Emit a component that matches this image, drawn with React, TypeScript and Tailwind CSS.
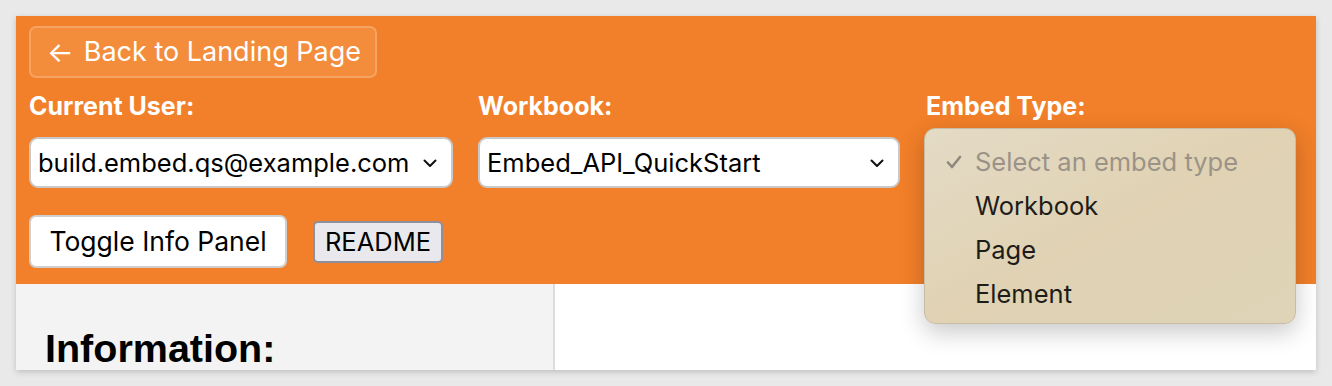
import React from "react";

const sf = { fontFamily: "Inter, 'Noto Sans', sans-serif" };

function Chevron() {
  return (
    <svg width="14" height="9" viewBox="0 0 14 9" fill="none">
      <path d="M1.5 1.5 L7 7 L12.5 1.5" stroke="#111" strokeWidth="2" strokeLinecap="round" strokeLinejoin="round" />
    </svg>
  );
}

function FakeSelect({ value, width }: { value: string; width: string }) {
  return (
    <div
      className={`${width} h-[51px] flex items-center justify-between rounded-[9px] border-2 border-[#c9c9c9] bg-white pl-[7px] pr-[14px] pt-[2px] text-[25.5px] text-black`}
    >
      <span>{value}</span>
      <Chevron />
    </div>
  );
}

export default function App() {
  const options = ["Workbook", "Page", "Element"];

  return (
    <div className="w-full h-[386px] bg-[#e9e9e9] pt-4 px-4" style={sf}>
      <div className="relative w-[1300px] h-[354px] overflow-hidden bg-white shadow-[0_2px_6px_rgba(0,0,0,0.18)]">
        {/* orange header */}
        <div className="h-[268px] bg-[#f27f29] pl-[13px] pt-[10px]">
          <button className="h-[52px] w-[348px] rounded-[7px] border-2 border-[#f5a463] bg-[#f38c3b] text-[27px] text-white flex items-center pl-[16px] gap-[10px]">
            <span className="text-[28px] leading-none">←</span>
            <span>Back to Landing Page</span>
          </button>

          <div className="flex mt-[13px]">
            <div className="w-[449px] flex flex-col">
              <label className="text-[25px] font-bold text-white leading-[30px]">Current User:</label>
              <div className="mt-[16px]">
                <FakeSelect value="build.embed.qs@example.com" width="w-[424px]" />
              </div>
            </div>
            <div className="w-[448px] flex flex-col">
              <label className="text-[25px] font-bold text-white leading-[30px]">Workbook:</label>
              <div className="mt-[16px]">
                <FakeSelect value="Embed_API_QuickStart" width="w-[422px]" />
              </div>
            </div>
            <div className="flex flex-col">
              <label className="text-[25px] font-bold text-white leading-[30px]">Embed Type:</label>
            </div>
          </div>

          <div className="flex items-center mt-[27px] gap-[26px]">
            <button className="h-[53px] w-[258px] rounded-[7px] border-2 border-[#cfcfcf] bg-white text-[26.5px] text-black">
              Toggle Info Panel
            </button>
            <button className="h-[42px] w-[130px] rounded-[5px] border-2 border-[#8f8f9d] bg-[#e9e9ed] text-[25.5px] text-black">
              README
            </button>
          </div>
        </div>

        {/* body */}
        <div className="flex h-[86px]">
          <div className="w-[539px] bg-[#f3f3f3] border-r-2 border-[#dcdcdc] pl-[29px] pt-[45px]">
            <h2 className="text-[39.5px] font-bold text-black leading-none" style={{ fontFamily: "'Liberation Sans', Arial, sans-serif" }}>
              Information:
            </h2>
          </div>
          <div className="flex-1 bg-white" />
        </div>

        {/* open select menu */}
        <div className="absolute left-[908px] top-[112px] w-[372px] h-[196px] rounded-[11px] border border-[#c8bda4] bg-gradient-to-br from-[#e4dbc6] via-[#e0d2b3] to-[#dfd4b8] shadow-[0_8px_24px_rgba(0,0,0,0.22)] pt-[11px]">
          <div className="h-[44px] flex items-center text-[25.5px] text-[#9b9387]">
            <span className="w-[50px] flex justify-end pr-[13px]">
              <svg width="16" height="14" viewBox="0 0 16 14" fill="none">
                <path d="M2 7.5 L6 12 L14 2" stroke="#8f887d" strokeWidth="2.6" strokeLinecap="round" strokeLinejoin="round" />
              </svg>
            </span>
            <span>Select an embed type</span>
          </div>
          {options.map((o) => (
            <div key={o} className="h-[44px] flex items-center text-[25.5px] text-[#1e1c19] pl-[50px]">
              {o}
            </div>
          ))}
        </div>
      </div>
    </div>
  );
}
